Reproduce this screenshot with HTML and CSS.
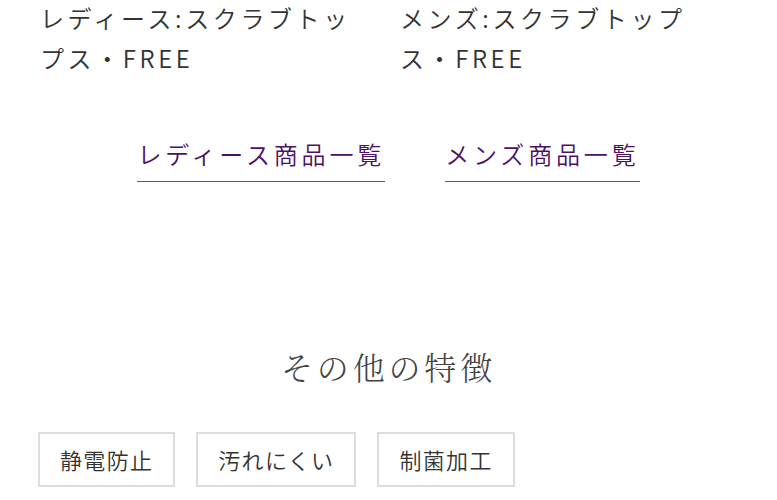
FILE: index.html
```html
<!DOCTYPE html>
<html lang="ja">
<head>
<meta charset="utf-8">
<link rel="stylesheet" href="styles.css">
</head>
<body>
<div class="page">
  <div class="products">
    <p class="product-name">レディース:スクラブトップス・FREE</p>
    <p class="product-name">メンズ:スクラブトップス・FREE</p>
  </div>
  <div class="links">
    <a class="list-link" href="#">レディース商品一覧</a>
    <a class="list-link" href="#">メンズ商品一覧</a>
  </div>
  <h2 class="section-title">その他の特徴</h2>
  <ul class="tags">
    <li class="tag">静電防止</li>
    <li class="tag">汚れにくい</li>
    <li class="tag">制菌加工</li>
  </ul>
</div>
</body>
</html>
```

FILE: styles.css
```css
html, body {
  margin: 0;
  padding: 0;
  background: #fff;
}
body {
  font-family: "Noto Sans CJK JP", sans-serif;
  font-weight: 350;
  color: #333;
  overflow: hidden;
}
.page {
  padding: 0 40px;
}
.products {
  display: grid;
  grid-template-columns: 320px 320px;
  column-gap: 40px;
  margin-top: -2px;
}
.product-name {
  margin: 0;
  font-size: 24px;
  line-height: 40px;
  letter-spacing: 0.15em;
}
.links {
  display: flex;
  justify-content: center;
  gap: 60px;
  margin-top: 56px;
}
.list-link {
  color: #4e1066;
  text-decoration: none;
  font-size: 24px;
  line-height: 40px;
  letter-spacing: 0.16em;
  border-bottom: 1px solid #6b4c92;
  padding-bottom: 7px;
}
.section-title {
  margin: 164px 0 0;
  text-align: center;
  font-family: "Noto Serif CJK JP", "Liberation Serif", serif;
  font-weight: 300;
  font-size: 32px;
  line-height: 40px;
  letter-spacing: 0.12em;
  color: #444;
}
.tags {
  list-style: none;
  margin: 46px 0 0;
  padding: 0;
  display: flex;
  gap: 21px;
  margin-left: -2px;
}
.tag {
  border: 2px solid #ddd;
  padding: 0 20px;
  height: 51px;
  line-height: 51px;
  font-size: 22px;
  letter-spacing: 0.06em;
}
```
